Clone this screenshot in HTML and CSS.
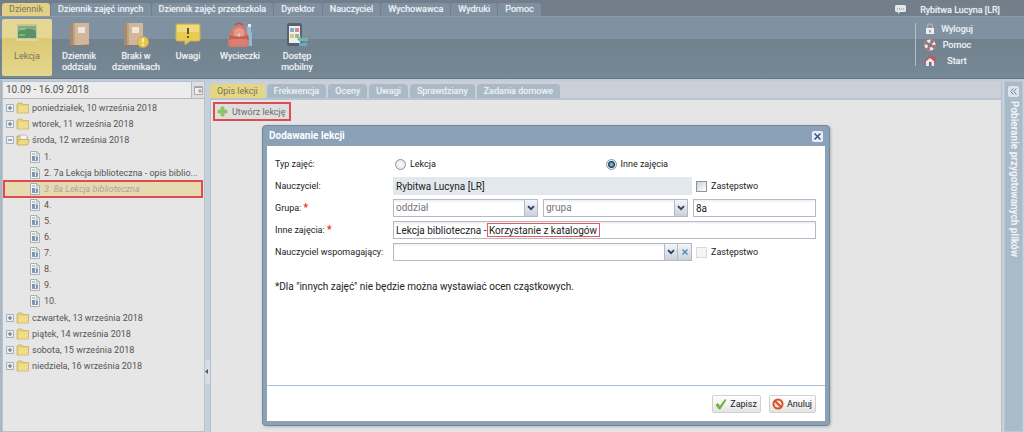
FILE: index.html
```
<!DOCTYPE html>
<html lang="pl">
<head>
<meta charset="utf-8">
<title>Dziennik</title>
<link rel="stylesheet" href="styles.css">
</head>
<body>
<svg class="defs" aria-hidden="true">
  <symbol id="folder" viewBox="0 0 14 12"><path d="M1 2.500 2 1h4l1 1.500h5.500v8.500H1z" fill="#e6cf77" stroke="#c5b06a" stroke-width=".8"/><path d="M2.500 4h9.500v6.500h-9.500z" fill="#f0dc8c"/></symbol>
  <symbol id="open" viewBox="0 0 14 12"><path d="M1 10V2h4l1 1h5v3" fill="#e8d27c" stroke="#b39c55" stroke-width=".8"/><path d="M4 1h6l1 1v4H4z" fill="#f3f3f3" stroke="#a9a9a9" stroke-width=".7"/><path d="M1 11 3 5.500h10.300L11.500 11z" fill="#f0da80" stroke="#c0ab60" stroke-width=".8"/></symbol>
  <symbol id="page" viewBox="0 0 10 12"><path d="M.5.500H7L9.500 3v8.500h-9z" fill="#f2f4f6" stroke="#a5b0b6"/><path d="M6.500.500V3h3" fill="#c9dbbc" stroke="#92ad82" stroke-width=".7"/><path d="M2 3h3M2 9.500h6M5.500 5h2.500M5.500 7h2.500" stroke="#8ba0b3"/><path d="M2 5h3v4H2zM6 6h2v3H6z" fill="#7f97ae"/></symbol>
  <symbol id="plus" viewBox="0 0 8 8"><path d="M.5.500h7v7h-7z" fill="#edf0f3" stroke="#a3afbc"/><path d="M2 4h4M4 2v4" stroke="#56697f"/></symbol>
  <symbol id="minus" viewBox="0 0 8 8"><path d="M.5.500h7v7h-7z" fill="#edf0f3" stroke="#a3afbc"/><path d="M2 4h4" stroke="#56697f"/></symbol>
  <symbol id="chev" viewBox="0 0 8 6"><path d="M1 1.200 4 4.200 7 1.200" fill="none" stroke="#2b4468" stroke-width="1.900"/></symbol>
  <symbol id="book" viewBox="0 0 26 26"><path d="M4 3 7 1v22l-3 1z" fill="#a58a6d"/><path d="M7 1h16v22H7z" fill="#d2b699"/><path d="M7 1h2v22H7z" fill="#bfa283"/><path d="M12 5h7v6h-7z" fill="#eee8dc"/><path d="M4 24h3l16-1" stroke="#917b65" fill="none"/></symbol>
</svg>
<header class="top">
  <div class="tabbar">
    <nav class="tabs">
      <a class="tab on" href="#">Dziennik</a><a class="tab" href="#">Dziennik zajęć innych</a><a class="tab" href="#">Dziennik zajęć przedszkola</a><a class="tab" href="#">Dyrektor</a><a class="tab" href="#">Nauczyciel</a><a class="tab" href="#">Wychowawca</a><a class="tab" href="#">Wydruki</a><a class="tab" href="#">Pomoc</a>
    </nav>
    <div class="user"><svg width="11" height="9" viewBox="0 0 11 9"><path d="M1 0h9l1 1v5L10 7H5L3 9V7H1L0 6V1z" fill="#e4e7ea"/><path d="M2 4h1m1 0h1m1 0h1m1 0h1" stroke="#7d8a96"/></svg><span>Rybitwa Lucyna [LR]</span></div>
  </div>
  <div class="ribbon">
    <div class="tools">
      <button class="tool on"><svg viewBox="0 0 26 26"><path d="M2 2h22v17H2z" fill="#dfd6a4"/><path d="M3 2h20v15H3z" fill="#c9c692"/><path d="M4 4h18v12H4z" fill="#569466"/><path d="M4 10q7-6 18-1V4H4z" fill="#80ad7c"/><path d="M6 7h6M5 13h6" stroke="#b4cfa9"/></svg><span>Lekcja</span></button>
      <button class="tool"><svg viewBox="0 0 26 26"><use href="#book"/></svg><span>Dziennik oddziału</span></button>
      <button class="tool wide"><svg viewBox="0 0 26 26"><g transform="translate(-3 0)"><use href="#book"/></g><circle cx="20" cy="20" r="5.500" fill="#e3c750" stroke="#c4ab4a"/><path d="M20 16.500v4M20 22v1.500" stroke="#fff3c0" stroke-width="1.800"/></svg><span>Braki w dziennikach</span></button>
      <button class="tool narrow"><svg viewBox="0 0 26 26"><path d="M2 2h22l1 1v15l-1 1H15l-5 4V19H2l-1-1V3z" fill="#e7cb55" stroke="#cbb24d"/><path d="M2 3h22v7H2z" fill="#efdc7e"/><path d="M13 6v6M13 14v2" stroke="#68582f" stroke-width="2"/></svg><span>Uwagi</span></button>
      <button class="tool wide"><svg viewBox="0 0 26 26"><path d="M20 4h4v5l1 2v13h-6z" fill="#8abbd8"/><path d="M21 2h3v3h-3z" fill="#e5f0f6"/><path d="M8 4q4-6 8 0" fill="none" stroke="#b0584e" stroke-width="1.500"/><path d="M4 9q1-6 8-6t8 6l2 9v5l-2 2H3l-2-2v-5z" fill="#d37b6e"/><path d="M3 13q9 4 18 0l1 5H2z" fill="#bd6257"/><path d="M7 8q5-5 10 0v6H7z" fill="#e29b8c"/><circle cx="12" cy="13" r="1.500" fill="#f0cbb8"/><path d="M4 17h16v6H4z" fill="#d9806f"/></svg><span>Wycieczki</span></button>
      <button class="tool"><svg viewBox="0 0 26 26"><rect x="3" y="1" width="15" height="23" rx="2" fill="#59626b"/><path d="M5 4h11v17H5z" fill="#edf0f2"/><path d="M6 6h4v4H6z" fill="#88a9d0"/><path d="M11 6h4v4h-4z" fill="#d2898a"/><path d="M6 12h4v4H6z" fill="#e0c471"/><path d="M11 12h4v4h-4z" fill="#96bb8b"/><path d="M13 17l4-3v2h7v3h-7v2z" fill="#78b5a1"/><path d="M24 22l-3-2v1h-6v3h6v1z" fill="#6fa6c8"/></svg><span>Dostęp mobilny</span></button>
    </div>
    <nav class="links">
      <a href="#"><svg viewBox="0 0 12 12"><path d="M3.500 6V3q0-2 2.500-2t2.500 2v3" fill="none" stroke="#a9b0b5" stroke-width="1.500"/><path d="M2 5h8v6H2z" fill="#eeeeea"/><path d="M5.500 7h1v2.500h-1z" fill="#59616b"/></svg><span>Wyloguj</span></a>
      <a href="#"><svg viewBox="0 0 12 12"><circle cx="6" cy="6" r="4" fill="none" stroke="#ecebeb" stroke-width="3"/><circle cx="6" cy="6" r="4" fill="none" stroke="#c45e66" stroke-width="3" stroke-dasharray="3.140"/></svg><span>Pomoc</span></a>
      <a href="#"><svg viewBox="0 0 12 12"><path d="M2 6 6 3l4 3v5H2z" fill="#ebe9e6"/><path d="M0 7 6 1.500 11 6V2H9v2" fill="none" stroke="#c6565b" stroke-width="1.500"/><path d="M5 7h2.500v4H5z" fill="#7c6866"/></svg><span>Start</span></a>
    </nav>
  </div>
</header>
<main class="work">
  <aside class="side">
    <div class="week"><input aria-label="Tydzień" value="10.09 - 16.09 2018"><button aria-label="Kalendarz"><svg width="9" height="9" viewBox="0 0 9 9"><path d="M.5.500h8v8h-8z" fill="#f0f0f0" stroke="#aaa"/><path d="M1 1.500h7" stroke="#9aa4b0"/><path d="M5 4h2v2H5z" fill="none" stroke="#a88"/></svg></button></div>
    <ul class="tree">
      <li><div class="row"><svg class="ex"><use href="#plus"/></svg><svg class="fo"><use href="#folder"/></svg><span>poniedziałek, 10 września 2018</span></div></li>
      <li><div class="row"><svg class="ex"><use href="#plus"/></svg><svg class="fo"><use href="#folder"/></svg><span>wtorek, 11 września 2018</span></div></li>
      <li><div class="row"><svg class="ex"><use href="#minus"/></svg><svg class="fo"><use href="#open"/></svg><span>środa, 12 września 2018</span></div>
        <ul class="sub">
          <li class="row"><svg class="pg"><use href="#page"/></svg><span>1.</span></li>
          <li class="row"><svg class="pg"><use href="#page"/></svg><span>2. 7a Lekcja biblioteczna - opis biblio...</span></li>
          <li class="row sel"><svg class="pg"><use href="#page"/></svg><span>3. 8a Lekcja biblioteczna</span></li>
          <li class="row"><svg class="pg"><use href="#page"/></svg><span>4.</span></li>
          <li class="row"><svg class="pg"><use href="#page"/></svg><span>5.</span></li>
          <li class="row"><svg class="pg"><use href="#page"/></svg><span>6.</span></li>
          <li class="row"><svg class="pg"><use href="#page"/></svg><span>7.</span></li>
          <li class="row"><svg class="pg"><use href="#page"/></svg><span>8.</span></li>
          <li class="row"><svg class="pg"><use href="#page"/></svg><span>9.</span></li>
          <li class="row"><svg class="pg"><use href="#page"/></svg><span>10.</span></li>
        </ul></li>
      <li><div class="row"><svg class="ex"><use href="#plus"/></svg><svg class="fo"><use href="#folder"/></svg><span>czwartek, 13 września 2018</span></div></li>
      <li><div class="row"><svg class="ex"><use href="#plus"/></svg><svg class="fo"><use href="#folder"/></svg><span>piątek, 14 września 2018</span></div></li>
      <li><div class="row"><svg class="ex"><use href="#plus"/></svg><svg class="fo"><use href="#folder"/></svg><span>sobota, 15 września 2018</span></div></li>
      <li><div class="row"><svg class="ex"><use href="#plus"/></svg><svg class="fo"><use href="#folder"/></svg><span>niedziela, 16 września 2018</span></div></li>
    </ul>
  </aside>
  <div class="split"><button aria-label="Zwiń panel"><svg width="3" height="5" viewBox="0 0 3 5"><path d="M3 0v5L0 2.500z" fill="#555"/></svg></button></div>
  <section class="center">
    <nav class="subtabs"><a class="on" href="#">Opis lekcji</a><a href="#">Frekwencja</a><a href="#">Oceny</a><a href="#">Uwagi</a><a href="#">Sprawdziany</a><a href="#">Zadania domowe</a></nav>
    <div class="panel"><button class="create"><svg width="11" height="11" viewBox="0 0 11 11"><path d="M4 1h3v3h3v3H7v3H4V7H1V4h3z" fill="#8fc468" stroke="#8aba6c" stroke-width=".7"/></svg>Utwórz lekcję</button></div>
  </section>
  <aside class="files"><button aria-label="Rozwiń"><svg width="7" height="7" viewBox="0 0 7 7"><path d="M3.300.500.800 3.500l2.500 3M6.300.500 3.800 3.500l2.500 3" fill="none" stroke="#6f8196"/></svg></button><span>Pobieranie przygotowanych plików</span></aside>
</main>
<form class="dialog" role="dialog" aria-labelledby="dlg">
  <div class="head"><h1 id="dlg">Dodawanie lekcji</h1><button type="button" class="close" aria-label="Zamknij"><svg width="7" height="7" viewBox="0 0 7 7"><path d="m.5.500 6 6m0-6-6 6" stroke="#3c4f8a" stroke-width="1.500"/></svg></button></div>
  <div class="body">
    <div class="fields">
      <span class="lab">Typ zajęć:</span>
      <div class="radios"><label><input type="radio" name="typ">Lekcja</label><label><input type="radio" name="typ" checked>Inne zajęcia</label></div>
      <label class="lab" for="n">Nauczyciel:</label>
      <div class="line"><input id="n" class="ro" readonly value="Rybitwa Lucyna [LR]"><label class="chk"><input type="checkbox">Zastępstwo</label></div>
      <label class="lab" for="g">Grupa: <b>*</b></label>
      <div class="group">
        <div class="combo"><select id="g"><option>oddział</option></select><span class="arrow"><svg width="8" height="6"><use href="#chev"/></svg></span></div>
        <div class="combo"><select aria-label="Grupa"><option>grupa</option></select><span class="arrow"><svg width="8" height="6"><use href="#chev"/></svg></span></div>
        <input class="text" aria-label="Nazwa grupy" value="8a">
      </div>
      <label class="lab" for="i">Inne zajęcia: <b>*</b></label>
      <div class="marked"><input id="i" class="text" value="Lekcja biblioteczna - Korzystanie z katalogów"><span class="mark"></span></div>
      <label class="lab" for="w">Nauczyciel wspomagający:</label>
      <div class="line"><div class="with"><div class="combo"><select id="w"><option></option></select><span class="arrow"><svg width="8" height="6"><use href="#chev"/></svg></span></div><button type="button" class="clear" aria-label="Wyczyść"><svg width="6" height="6" viewBox="0 0 6 6"><path d="m.5.500 5 5m0-5-5 5" stroke="#4f87b5" stroke-width="1.400"/></svg></button></div><label class="chk"><input type="checkbox" disabled>Zastępstwo</label></div>
    </div>
    <p>*Dla "innych zajęć" nie będzie można wystawiać ocen cząstkowych.</p>
  </div>
  <div class="foot">
    <button class="act" type="button"><svg viewBox="0 0 12 12"><path d="M1 7 3 5.500l1.800 3L10 1.500l1 .5L5.200 11H4z" fill="#77b92f" stroke="#599a26" stroke-width=".6"/></svg>Zapisz</button>
    <button class="act" type="button"><svg viewBox="0 0 12 12"><circle cx="6" cy="6" r="4.500" fill="#f7e5dc" stroke="#d9502d" stroke-width="2"/><path d="m3 3 6 6" stroke="#d9502d" stroke-width="2"/></svg>Anuluj</button>
  </div>
</form>
</body>
</html>
```
FILE: styles.css
```
* { box-sizing: border-box; }
body { margin: 0; height: 100vh; display: flex; flex-direction: column; overflow: hidden; font: 9px/12px Roboto, "Liberation Sans", sans-serif; color: #555; background: #c9d0da; position: relative; }
button, input, select { font: inherit; color: inherit; margin: 0; padding: 0; border: 0; min-width: 0; }
a { color: inherit; text-decoration: none; }
svg { display: block; flex: none; }
ul { list-style: none; margin: 0; padding: 0; }
.defs { position: absolute; width: 0; height: 0; }

.top { color: #f0f3f5; text-shadow: 0 0 1px #d5dbe0; }
.tabbar { display: flex; justify-content: space-between; background: #727f8b; padding: 3px 24px 0 2px; }
.tabs { display: flex; gap: 1px; }
.tab { background: #7e8f9f; border-radius: 3px 3px 0 0; padding: 0 7px; height: 13px; line-height: 13px; }
.tab.on { background: #e2d184; color: #77745f; text-shadow: none; }
.user { display: flex; align-items: center; gap: 14px; }
.ribbon { display: flex; justify-content: space-between; height: 63px; padding: 2px 0; border-top: 1px solid #8d9daa; border-bottom: 1px solid #66737f; background: linear-gradient(#8091a1 22px, #72818e 22px, #758895); }
.tools { display: flex; gap: 2px; padding-left: 2px; }
.tool { width: 50px; background: none; display: flex; flex-direction: column; align-items: center; gap: 3px; padding-top: 3px; line-height: 11px; text-shadow: inherit; }
.tool.wide { width: 60px; }
.tool.narrow { width: 40px; }
.tool svg { width: 26px; height: 26px; }
.tool.on { background: linear-gradient(#e5d795 19px, #dcc873 19px, #e5d78f); border-radius: 2px; color: #77745f; text-shadow: none; }
.links { display: flex; flex-direction: column; gap: 4px; border-left: 1px solid #b2bec8; margin: 4px 0 10px; padding-left: 8px; width: 109px; }
.links a { display: grid; grid-template-columns: 12px 42px; align-items: center; }
.links svg { width: 12px; height: 12px; }
.links span { text-align: center; }

.work { flex: 1; display: flex; min-height: 0; border-top: 2px solid #c2ccd8; border-left: 2px solid #aab6c2; }
.side { width: 203px; background: #e6e6e6; border: 1px solid #b9c3cf; }
.week { display: flex; height: 17px; border-bottom: 1px solid #b4b8bd; }
.week input { flex: 1; background: #ececec; padding: 0 3px; font-size: 10px; }
.week button { width: 13px; background: #dedede; border-left: 1px solid #b4b8bd; display: grid; place-items: center; }
.tree { padding: 1px 0; }
.row { display: flex; align-items: center; height: 16px; padding-left: 3px; }
.row span { white-space: nowrap; }
.ex { width: 8px; height: 8px; margin-right: 2px; }
.fo { width: 14px; height: 12px; margin-right: 2px; }
.pg { width: 10px; height: 12px; margin-right: 4px; }
.sub { padding: 1px 0; }
.sub .row { padding-left: 27px; }
.sub .sel { background: #e7dab1; outline: 2px solid #dd4c50; outline-offset: -1px; margin: 0 2px 0 1px; padding-left: 26px; color: #aaa69a; font-style: italic; }
.split { width: 5px; background: #c5d0da; display: flex; align-items: center; padding-top: 230px; }
.split button { height: 24px; width: 5px; background: #d7dde3; }
.center { flex: 1; display: flex; flex-direction: column; background: #cbcfd8; border-right: 1px solid #b4c0ce; }
.subtabs { display: flex; gap: 2px; padding: 3px 0 0; border-bottom: 2px solid #b8c4d1; }
.subtabs a { background: #a9b9c6; color: #edf1f4; border-radius: 4px 4px 0 0; height: 14px; line-height: 14px; padding: 0 7px; text-shadow: 0 0 1px #dde4e9; }
.subtabs .on { background: #e5d684; color: #77745f; text-shadow: none; }
.panel { flex: 1; background: #e5e5e5; border-left: 1px solid #b4c0ce; padding: 2px; }
.create { display: flex; align-items: center; gap: 4px; height: 19px; padding: 0 3px 0 2px; border: 2px solid #dd4c50; background: #dedede; color: #6c6c6c; }
.files { width: 19px; margin: 0 1px 0 2px; background: #a9bac9; border: 1px solid #b9c7d4; display: flex; flex-direction: column; align-items: center; gap: 4px; padding-top: 4px; }
.files button { width: 11px; height: 11px; border-radius: 2px; background: #dce4ec; display: grid; place-items: center; }
.files span { writing-mode: vertical-rl; color: #f0f3f5; font-weight: 700; font-size: 10px; line-height: 12px; white-space: nowrap; }

.dialog { position: absolute; left: 262px; top: 125px; width: 568px; display: flex; flex-direction: column; background: #8ba1b7; border: 1px solid #73879b; border-radius: 4px; box-shadow: 1px 1px 3px #8888; padding: 0 4px 4px; color: #222; }
.head { display: flex; align-items: center; justify-content: space-between; height: 20px; padding: 0 2px; }
.head h1 { margin: 0; font-size: 10px; line-height: 12px; color: #fff; }
.close { width: 11px; height: 11px; background: #e5edfa; border-radius: 2px; display: grid; place-items: center; }
.body { background: #fff; padding: 9px 9px 0 8px; height: 240px; border-bottom: 1px solid #a9bfda; }
.fields { display: grid; grid-template-columns: 114px 1fr; column-gap: 4px; row-gap: 4px; grid-auto-rows: 18px; align-items: center; }
.lab b { color: #f02020; font-size: 10px; }
.radios { display: grid; grid-template-columns: 1fr 1fr; padding-left: 2px; }
.radios label, .chk { display: flex; align-items: center; gap: 4px; }
.radios input { appearance: none; width: 11px; height: 11px; border-radius: 50%; border: 1px solid #8e959d; background: radial-gradient(#fff, #dcdfe2); }
.radios input:checked { background: radial-gradient(circle, #7ab5d0 1px, #153a58 3px, #e6edf2 4px); }
.line { display: grid; grid-template-columns: 1fr 120px; gap: 4px; }
.chk input { appearance: none; width: 11px; height: 11px; border: 1px solid #8c949c; background: linear-gradient(135deg, #ccd1d6, #fff); }
.chk input:disabled { border-color: #dadada; background: #f5f5f5; }
.ro { background: #e3e8ed; height: 18px; padding: 0 3px; font-size: 10px; }
.text { width: 100%; height: 18px; border: 1px solid #b5b8c8; background: linear-gradient(#eee, #fff 3px); padding: 0 2px; font-size: 10px; }
.group { display: grid; grid-template-columns: 145px 145px 1fr; gap: 5px; }
.combo { display: grid; grid-template-columns: 1fr 14px; }
.combo select { grid-area: 1 / 1 / 2 / 3; appearance: none; height: 18px; border: 1px solid #b5b8c8; border-radius: 0; background: linear-gradient(#eee, #fff 3px); padding: 0 2px; color: #777; font-size: 10px; }
.arrow { grid-area: 1 / 2; display: grid; place-items: center; background: linear-gradient(#f4f6f9, #cbd1da); border: 1px solid #b5b8c8; pointer-events: none; }
.with { display: grid; grid-template-columns: 1fr 14px; }
.clear { background: linear-gradient(#f4f6f9, #cbd1da); border: 1px solid #b5b8c8; border-left: 0; display: grid; place-items: center; }
.marked { position: relative; }
.mark { position: absolute; left: 94px; top: 2px; width: 113px; height: 14px; border: 1px solid #e85a5e; pointer-events: none; }
.body p { margin: 19px 0 0; font-size: 10px; line-height: 14px; }
.foot { background: #fff; display: flex; justify-content: flex-end; gap: 8px; padding: 9px 9px 8px; height: 35px; }
.act { display: flex; align-items: center; gap: 3px; height: 18px; padding: 0 3px 0 2px; border: 1px solid #d0d0d0; border-radius: 2px; background: linear-gradient(#fff, #e4e4e4); }
.act svg { width: 12px; height: 12px; }
```
